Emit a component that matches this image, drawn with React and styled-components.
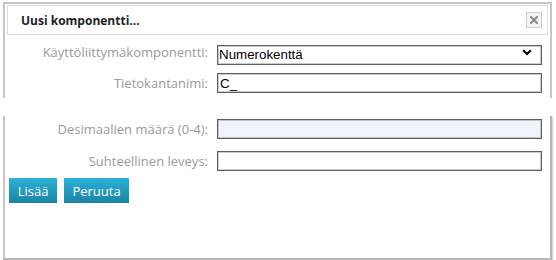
import React from "react";
import styled, { createGlobalStyle } from "styled-components";

const Global = createGlobalStyle`
  html, body { margin: 0; padding: 0; background: #fff; }
  body { font-family: "Open Sans", "Noto Sans", sans-serif; }
`;

const Page = styled.div`
  width: 556px;
  height: 260px;
  padding: 2px 0 0 3px;
  box-sizing: border-box;
`;

const Dialog = styled.div`
  width: 549px;
  display: flex;
  flex-direction: column;
`;

const TopPart = styled.div`
  border: 2px solid #c6c6c6;
  border-bottom: none;
  padding: 1px 2px 5px 0;
  display: flex;
  flex-direction: column;
`;

const Gap = styled.div`
  height: 18px;
`;

const BottomPart = styled.div`
  border: 2px solid #c6c6c6;
  border-top: none;
  border-right-color: #b4b4b4;
  border-bottom-color: #b8b8b8;
  height: 139px;
  padding-top: 3px;
  box-shadow: 1px 1px 1px rgba(0, 0, 0, 0.15);
  display: flex;
  flex-direction: column;
`;

const Header = styled.div`
  margin-left: 2px;
  height: 28px;
  border: 1px solid #dcdcdc;
  display: flex;
  align-items: center;
  justify-content: space-between;
  padding: 0 5px 0 13px;
`;

const Title = styled.span`
  font-size: 12px;
  font-weight: 700;
  color: #222;
`;

const CloseButton = styled.button`
  width: 16px;
  height: 16px;
  padding: 0;
  border: 1px solid #cfcfcf;
  background: #f3f3f3;
  display: flex;
  align-items: center;
  justify-content: center;
`;

const Form = styled.div`
  display: grid;
  grid-template-columns: 203px 325px;
  column-gap: 9px;
  row-gap: ${(p) => p.$gap}px;
  align-items: center;
  margin-top: ${(p) => p.$top}px;
`;

const Label = styled.label`
  text-align: right;
  font-size: 13px;
  color: #9a9a9a;
  white-space: nowrap;
`;

const fieldCss = `
  box-sizing: border-box;
  width: 325px;
  height: 20px;
  border: 1px solid #5e5e5e;
  outline: none;
  box-shadow: inset 0 0 0 1px rgba(110, 110, 110, 0.35);
  font-family: "Liberation Sans", Arial, sans-serif;
  font-size: 13.33px;
  color: #000;
  padding: 0 2px;
  margin: 0;
`;

const Input = styled.input`
  ${fieldCss}
  background: ${(p) => (p.$tinted ? "#eef3fc" : "#fff")};
`;

const SelectWrap = styled.div`
  position: relative;
  width: 325px;
  height: 20px;
`;

const Select = styled.select`
  ${fieldCss}
  appearance: none;
  background: #fff;
  padding: 0 1px;
`;

const Chevron = styled.svg`
  position: absolute;
  right: 10px;
  top: 7px;
  pointer-events: none;
`;

const Buttons = styled.div`
  display: flex;
  gap: 7px;
  margin: 7px 0 0 4px;
`;

const Button = styled.button`
  height: 25px;
  width: ${(p) => p.$w}px;
  border: none;
  padding: 0;
  color: #fff;
  font-family: "Open Sans", "Noto Sans", sans-serif;
  font-size: 13px;
  background: linear-gradient(#2bb2d8, #1b84a5);
`;

export default function App() {
  return (
    <Page>
      <Global />
      <Dialog>
        <TopPart>
          <Header>
            <Title>Uusi komponentti...</Title>
            <CloseButton aria-label="close">
              <svg width="8" height="8" viewBox="0 0 8 8">
                <path d="M1 1 L7 7 M7 1 L1 7" stroke="#8c8c8c" strokeWidth="2.2" strokeLinecap="square" />
              </svg>
            </CloseButton>
          </Header>
          <Form $gap={11} $top={7}>
            <Label>Käyttöliittymäkomponentti:</Label>
            <SelectWrap>
              <Select defaultValue="num">
                <option value="num">Numerokenttä</option>
              </Select>
              <Chevron width="10" height="7" viewBox="0 0 10 7">
                <path d="M1.2 1.2 L5 5 L8.8 1.2" fill="none" stroke="#000" strokeWidth="2.2" />
              </Chevron>
            </SelectWrap>
            <Label>Tietokantanimi:</Label>
            <Input defaultValue="C_" />
          </Form>
        </TopPart>
        <Gap />
        <BottomPart>
          <Form $gap={12} $top={0}>
            <Label>Desimaalien määrä (0-4):</Label>
            <Input $tinted />
            <Label>Suhteellinen leveys:</Label>
            <Input />
          </Form>
          <Buttons>
            <Button $w={48}>Lisää</Button>
            <Button $w={65}>Peruuta</Button>
          </Buttons>
        </BottomPart>
      </Dialog>
    </Page>
  );
}
